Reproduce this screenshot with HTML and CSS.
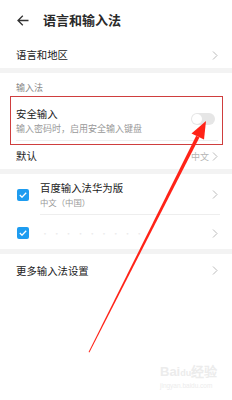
FILE: index.html
```html
<!DOCTYPE html>
<html lang="zh-CN">
<head>
<meta charset="utf-8">
<link rel="stylesheet" href="styles.css">
</head>
<body>
<div class="page">
  <header class="header">
    <svg class="back" width="12" height="11" viewBox="0 0 12 11"><path d="M11.5 5.5H1M5.8 0.7L1 5.5l4.8 4.8" fill="none" stroke="#333" stroke-width="1.3"/></svg>
    <span class="title">语言和输入法</span>
  </header>

  <div class="row r-region">
    <span class="label">语言和地区</span>
    <svg class="chev" width="6" height="9" viewBox="0 0 6 9"><path d="M1 0.5l4 4-4 4" fill="none" stroke="#bbb" stroke-width="1"/></svg>
  </div>
  <div class="band"></div>

  <div class="section">输入法</div>

  <div class="row r-secure">
    <div class="texts">
      <span class="label">安全输入</span>
      <span class="sub">输入密码时，启用安全输入键盘</span>
    </div>
    <span class="toggle"><span class="knob"></span></span>
  </div>
  <div class="row r-default">
    <span class="label">默认</span>
    <span class="right"><span class="val">中文</span>
    <svg class="chev" width="6" height="9" viewBox="0 0 6 9"><path d="M1 0.5l4 4-4 4" fill="none" stroke="#bbb" stroke-width="1"/></svg></span>
  </div>
  <div class="band"></div>

  <div class="row r-ime">
    <span class="check"><svg width="8" height="6" viewBox="0 0 8 6"><path d="M0.8 3l2.2 2.2L7.2 0.8" fill="none" stroke="#fff" stroke-width="1.3"/></svg></span>
    <div class="texts">
      <span class="label">百度输入法华为版</span>
      <span class="sub sm">中文（中国）</span>
    </div>
    <svg class="chev" width="6" height="9" viewBox="0 0 6 9"><path d="M1 0.5l4 4-4 4" fill="none" stroke="#bbb" stroke-width="1"/></svg>
  </div>
  <div class="row r-ime2">
    <span class="check"><svg width="8" height="6" viewBox="0 0 8 6"><path d="M0.8 3l2.2 2.2L7.2 0.8" fill="none" stroke="#fff" stroke-width="1.3"/></svg></span>
    <span class="blur">· · · · · · · · ·</span>
    <svg class="chev" width="6" height="9" viewBox="0 0 6 9"><path d="M1 0.5l4 4-4 4" fill="none" stroke="#bbb" stroke-width="1"/></svg>
  </div>
  <div class="band"></div>

  <div class="row r-more">
    <span class="label">更多输入法设置</span>
    <svg class="chev" width="6" height="9" viewBox="0 0 6 9"><path d="M1 0.5l4 4-4 4" fill="none" stroke="#bbb" stroke-width="1"/></svg>
  </div>

  <div class="redbox"></div>
  <svg class="arrow" width="232" height="400" viewBox="0 0 232 400">
    <polygon points="88.6,352 89.4,352.4 199.4,137.5 196.2,135.8" fill="#ff2318"/>
    <polygon points="206,121 204,139.5 191.5,133.5" fill="#ff2318"/>
  </svg>
  <div class="watermark">
    <span class="wm1">Bai<span class="du">du</span>经验</span>
    <span class="wm2">jingyan.baidu.com</span>
  </div>
</div>
</body>
</html>
```
FILE: styles.css
```css
* { box-sizing: border-box; margin: 0; padding: 0; }
html, body { width: 232px; height: 400px; background: #fff; overflow: hidden; }
body { font-family: "Noto Sans CJK SC", "Noto Sans", sans-serif; color: #222; }
.page { position: relative; width: 232px; height: 400px; }

.header { height: 40px; display: flex; align-items: center; padding-left: 17px; }
.back { display: block; }
.title { margin-left: 14px; font-size: 13px; font-weight: bold; color: #2a2a2a; line-height: 16px; }

.row { display: flex; align-items: center; padding: 0 14px 0 16px; }
.label { font-size: 10.4px; line-height: 14px; color: #222; }
.sub { font-size: 9px; line-height: 12px; color: #999; }
.sub.sm { font-size: 8.4px; }
.texts { display: flex; flex-direction: column; flex: 1; }
.chev { display: block; margin-left: auto; }

.r-region { height: 28px; padding-top: 2px; }
.band { height: 5px; background: #f3f3f3; }
.section { height: 24px; padding: 9px 0 0 16px; font-size: 9px; line-height: 12px; color: #888; }

.r-secure { height: 44px; padding-top: 4px; position: relative; }
.r-secure::after { content: ""; position: absolute; left: 16px; right: 14px; bottom: 0; border-bottom: 1px solid #eee; }
.r-secure .texts { gap: 2px; }
.toggle { width: 24px; height: 12px; border-radius: 6px; background: #e6e6e6; margin-right: 3px; margin-top: -5px; position: relative; display: block; }
.knob { position: absolute; left: 1px; top: 1px; width: 10px; height: 10px; border-radius: 50%; background: #fff; }

.r-default { height: 28px; padding-top: 2px; }
.right { margin-left: auto; display: flex; align-items: center; gap: 3px; }
.val { font-size: 9px; color: #b5b5b5; }

.r-ime { height: 41px; position: relative; padding-left: 17px; }
.r-ime::after { content: ""; position: absolute; left: 40px; right: 12px; bottom: 0; border-bottom: 1px solid #eee; }
.r-ime .texts { margin-left: 11px; gap: 1px; }
.check { width: 12px; height: 12px; border-radius: 2px; background: #1e9cf0; display: flex; align-items: center; justify-content: center; flex: none; }
.r-ime2 { height: 34px; padding-left: 17px; padding-top: 2px; }
.blur { margin-left: 12px; font-size: 8px; color: #ebebeb; letter-spacing: 1px; }
.r-more { height: 32px; padding-top: 1px; }

.redbox { position: absolute; left: 10px; top: 96px; width: 213px; height: 49px; border: 1.5px solid #cf3e3e; }
.arrow { position: absolute; left: 0; top: 0; }
.watermark { position: absolute; left: 160px; top: 364px; display: flex; flex-direction: column; color: #ececec; font-family: "Liberation Sans", sans-serif; }
.wm1 { font-size: 13px; font-weight: bold; line-height: 16px; }
.du { font-size: 9px; }
.wm2 { font-size: 6.5px; line-height: 9px; }
```
